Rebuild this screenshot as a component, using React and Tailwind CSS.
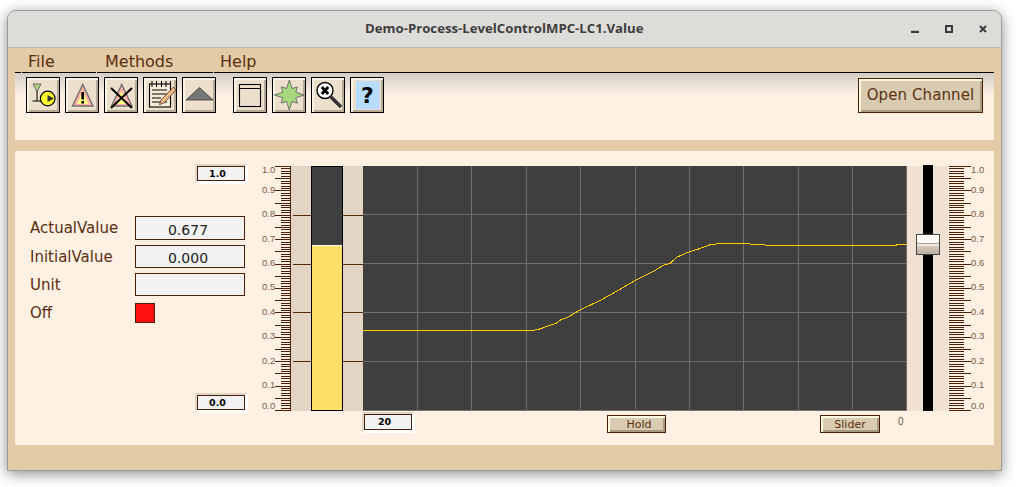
import React from "react";

const TICK = "#4a1f05";

function Scale({ side }) {
  const left = side === "left";
  const items = [];
  for (let i = 0; i <= 100; i++) {
    const y = Math.min(244, Math.round(i * 2.44));
    const long = i % 5 === 0 && i % 2 === 0 ? i % 10 === 0 || i % 5 === 0 : i % 5 === 0;
    if (left) {
      items.push(<rect key={i} x={long ? 13 : 19} y={y} width={long ? 15 : 9} height="1" fill={TICK} />);
    } else {
      items.push(<rect key={i} x="1" y={y} width={long ? 22 : 15} height="1" fill={TICK} />);
    }
  }
  const labels = ["1.0", "0.9", "0.8", "0.7", "0.6", "0.5", "0.4", "0.3", "0.2", "0.1", "0.0"];
  return (
    <svg width={left ? 29 : 37} height="245" className="shrink-0 overflow-visible">
      <g shapeRendering="crispEdges">
        {items}
        {left && <rect x="28" y="0" width="1" height="245" fill={TICK} />}
      </g>
      {labels.map((t, i) => {
        let y = i * 24.4 + 2.4;
        if (i === 0) y = 7.2;
        if (i === 10) y = 243.4;
        return (
          <text key={t} x={left ? 0 : 23} y={y} fontSize="9.5" fill="#7b5a44" fontFamily="'Liberation Sans',sans-serif">
            {t}
          </text>
        );
      })}
    </svg>
  );
}

function StripTicks({ x1 }) {
  return (
    <svg width="20" height="245" className="block">
      <g shapeRendering="crispEdges" fill="#5a2a0a">
        {[49, 98, 146, 195].map((y) => (
          <rect key={y} x={x1} y={y} width={20 - x1} height="1" />
        ))}
      </g>
    </svg>
  );
}

function Chart() {
  const pts = [
    [0, 164.5], [170, 164.5], [177, 162.9], [193.7, 156.9], [197.7, 153.9], [203.7, 151.9], [217, 143.9], [237, 134.5],
    [253.7, 125.2], [270.3, 115.5], [290.3, 105.5], [300.3, 99.2], [307, 97.5], [313.7, 91.2], [323.7, 86.8], [337, 82.5],
    [347, 78.8], [358.7, 77.2], [372, 77.2], [373.7, 77.8], [387, 77.8], [388.7, 78.8], [402, 78.8], [403, 79.5],
    [533, 79.5], [533, 78.5], [544, 78.5],
  ];
  return (
    <svg width="544" height="245" className="shrink-0 block bg-[#3f3f3f]">
      <g shapeRendering="crispEdges" fill="#707070">
        {[54, 108, 163, 217, 272, 326, 380, 435, 489].map((x) => (
          <rect key={x} x={x} y="0" width="1" height="244" />
        ))}
        {[48, 97, 146, 195].map((y) => (
          <rect key={y} x="0" y={y} width="544" height="1" />
        ))}
        <rect x="0" y="244" width="544" height="1" />
        <rect x="543" y="0" width="1" height="245" />
      </g>
      <polyline points={pts.map((p) => p.join(",")).join(" ")} fill="none" stroke="#ffcc00" strokeWidth="1" shapeRendering="crispEdges" />
    </svg>
  );
}

function Halo({ children, className = "", h = 15 }) {
  return (
    <div className={"border-t-2 border-l-2 border-r-3 border-b-3 border-t-[#e2d6c6] border-l-[#e2d6c6] border-r-white border-b-white w-[53px] " + className}>
      <div className={"border border-[#4a1f05] bg-[#f2f2f2] flex items-center justify-center text-[9.5px] font-bold text-black pr-[7px] pt-[1px] " + (h === 16 ? "h-[16px]" : "h-[15px]")}>
        {children}
      </div>
    </div>
  );
}

function Field({ label, value, rowClass, valueClass = "pt-[3px]" }) {
  return (
    <div className={"flex items-center " + rowClass}>
      <div className="w-[105px] text-[15px] text-[#5a2d0c] pt-[1px]">{label}</div>
      <div className={"w-[110px] h-full border border-[#4a1f05] bg-[#f2f2f2] text-[14px] text-[#222] flex items-center justify-center pr-[4px] " + valueClass}>
        {value}
      </div>
    </div>
  );
}

function ToolBtn({ children, className = "" }) {
  return (
    <button className={"w-[34px] h-[36px] shrink-0 border border-black bg-[#ecdfcc] shadow-[inset_2px_2px_0_#fbf4e6,inset_-2px_-2px_0_#b5aa95] " + className}>
      <svg width="32" height="34" viewBox="1 1 32 34" className="block">
        {children}
      </svg>
    </button>
  );
}

function SmallBtn({ children, className }) {
  return (
    <button className={"h-[18px] border border-[#4a1f05] bg-[#d9ccb3] shadow-[inset_2px_2px_0_#fff9e6,inset_-2px_-2px_0_#a89a82] text-[11px] text-[#5a2d0c] flex items-center justify-center shrink-0 pt-[2px] " + className}>
      {children}
    </button>
  );
}

function Warn({ inner = true }) {
  return (
    <>
      <polygon points="17.7,7.5 7.5,29 28,29" fill="#ffb0a8" stroke="#707070" strokeWidth="1.4" />
      <polygon points="17.7,14 12,27 23.5,27" fill="#ffff80" />
      {inner && (
        <>
          <rect x="16.4" y="15" width="2.6" height="7.5" fill="#000" />
          <rect x="16.4" y="24" width="2.6" height="2.6" fill="#000" />
        </>
      )}
    </>
  );
}

function starPoints() {
  const out = [];
  for (let i = 0; i < 16; i++) {
    const a = (i * Math.PI) / 8 - Math.PI / 2;
    const r = i % 4 === 0 ? 15 : i % 2 === 0 ? 11.5 : 7;
    out.push((17.3 + r * Math.cos(a)).toFixed(1) + "," + (18 + r * Math.sin(a)).toFixed(1));
  }
  return out.join(" ");
}

export default function App() {
  return (
    <div className="w-[1023px] h-[487px] overflow-hidden bg-white font-['DejaVu_Sans',sans-serif]">
      <div className="ml-[7px] mt-[10px] w-[995px] h-[461px] border border-[#9b9b9b] rounded-t-[9px] overflow-hidden shadow-[0_3px_14px_rgba(0,0,0,0.45)] bg-[#e3cba8] flex flex-col">
        <div className="h-[37px] shrink-0 border-b border-[#bdb9b2] bg-[#dedcd9] flex items-center">
          <div className="ml-[357px] font-['Open_Sans',sans-serif] font-bold text-[13.2px] text-[#3d3d3d]">
            Demo-Process-LevelControlMPC-LC1.Value
          </div>
          <div className="ml-auto mr-[14px] flex items-center gap-[26px]">
            <svg width="8" height="8"><rect x="0" y="5.8" width="8" height="2.2" fill="#3b3b3b" /></svg>
            <svg width="8" height="8"><rect x="1" y="1" width="6" height="6" fill="none" stroke="#3b3b3b" strokeWidth="2" /></svg>
            <svg width="8" height="8"><path d="M1 1 L7 7 M7 1 L1 7" stroke="#3b3b3b" strokeWidth="2" /></svg>
          </div>
        </div>

        <div className="flex-1 flex flex-col px-[7px]">
          <div className="h-[25px] shrink-0 flex gap-[1px] text-[16px] leading-[24px] text-[#5a2d0c]">
            <div className="w-[6px] border-b border-black" />
            <div className="w-[74px] border-b border-black pl-[6px] pt-[2px]">File</div>
            <div className="w-[116px] border-b border-black pl-[8px] pt-[2px]">Methods</div>
            <div className="flex-1 border-b border-black pl-[6px] pt-[2px]">Help</div>
          </div>

          <div className="h-[67px] shrink-0 flex items-start pt-[4px] pl-[11px] pr-[11px] gap-[5px] bg-linear-to-b from-[#d3cdc3] to-[#fef1e4] to-[33%]">
            <ToolBtn>
              <polygon points="7,7 15,7 11,14.5" fill="#b4d480" stroke="#666" strokeWidth="1" />
              <path d="M11 14 V24 M6.5 24 H15" stroke="#000" strokeWidth="1" fill="none" />
              <circle cx="21.7" cy="21.5" r="7.3" fill="#ffff30" stroke="#000" strokeWidth="1.2" />
              <polygon points="21.5,18 21.5,25 28,21.5" fill="#333" />
            </ToolBtn>
            <ToolBtn><Warn /></ToolBtn>
            <ToolBtn>
              <Warn inner={false} />
              <path d="M7 11 L28 31 M28 11 L7 31" stroke="#000" strokeWidth="2" fill="none" />
            </ToolBtn>
            <ToolBtn>
              <rect x="6.5" y="7" width="21" height="23" fill="#f6ead8" stroke="#000" strokeWidth="1.1" />
              <path d="M9 4 V10 M13.5 4 V10 M18.5 4 V10 M23 4 V10 M27.5 4 V10" stroke="#000" strokeWidth="1" />
              <path d="M9 13 H24 M9 17 H24 M9 21 H18 M9 25 H24" stroke="#000" strokeWidth="1" />
              <polygon points="30.5,10 33,13 21,26 16.5,27.5 18,23" fill="#f4b880" stroke="#6a5040" strokeWidth="1" />
            </ToolBtn>
            <ToolBtn>
              <polygon points="4,23 31,23 17.4,10.5" fill="#777" stroke="#111" strokeWidth="0.6" />
            </ToolBtn>
            <div className="w-[7px] shrink-0" />
            <ToolBtn>
              <rect x="6.5" y="7.5" width="21" height="22" fill="none" stroke="#000" strokeWidth="1.1" />
              <path d="M6.5 11.5 H27.5" stroke="#000" strokeWidth="1" />
            </ToolBtn>
            <ToolBtn>
              <polygon points={starPoints()} fill="#a8d880" stroke="#666" strokeWidth="0.9" />
            </ToolBtn>
            <ToolBtn>
              <path d="M20 20 L30 30" stroke="#333" strokeWidth="3.6" />
              <circle cx="14" cy="13.5" r="8" fill="#fff" stroke="#000" strokeWidth="1.4" />
              <path d="M10.8 10 L17.2 17 M17.2 10 L10.8 17" stroke="#000" strokeWidth="2.8" />
            </ToolBtn>
            <ToolBtn>
              <rect x="6" y="4" width="23.5" height="28" fill="#b8dcff" />
              <text x="17.5" y="26" textAnchor="middle" fontSize="22" fontWeight="700" fontFamily="'DejaVu Sans',sans-serif" fill="#000">?</text>
            </ToolBtn>
            <button className="ml-auto mt-[1px] w-[125px] h-[35px] shrink-0 border border-[#4a1f05] bg-[#d9cbb1] shadow-[inset_2px_2px_0_#fff9e0,inset_-2px_-2px_0_#a99a80] text-[15px] tracking-[0.1px] text-[#5a3312]">
              Open Channel
            </button>
          </div>

          <div className="h-[11px] shrink-0" />

          <div className="h-[294px] shrink-0 bg-[#fef1e4] flex">
            <div className="w-[247px] shrink-0 flex flex-col pl-[15px] pr-[14px] pt-[13px] pb-[32px]">
              <Halo className="self-end"><span>1.0</span></Halo>
              <Field label="ActualValue" value="0.677" rowClass="h-[24px] mt-[32px]" valueClass="pt-[4px]" />
              <Field label="InitialValue" value="0.000" rowClass="h-[23px] mt-[5px]" />
              <Field label="Unit" value="" rowClass="h-[23px] mt-[5px]" />
              <div className="flex items-center h-[20px] mt-[7px]">
                <div className="w-[105px] text-[15px] text-[#5a2d0c]">Off</div>
                <div className="w-[20px] h-[20px] border border-[#4a1f05] bg-[#ff1010]" />
              </div>
              <Halo className="self-end mt-auto"><span>0.0</span></Halo>
            </div>

            <div className="flex-1 flex flex-col pt-[15px]">
              <div className="h-[245px] flex shrink-0">
                <Scale side="left" />
                <div className="w-[20px] h-full bg-[#e2d5c3]"><StripTicks x1={2} /></div>
                <div className="w-[32px] h-full border border-black flex flex-col">
                  <div className="h-[78px] bg-[#3f3f3f]" />
                  <div className="h-px bg-white" />
                  <div className="flex-1 bg-[#ffe066]" />
                </div>
                <div className="w-[20px] h-full bg-[#e2d5c3]"><StripTicks x1={0} /></div>
                <Chart />
                <div className="relative w-[41px] h-full bg-[#f0e1d3] shrink-0">
                  <div className="ml-[16px] w-[10px] h-[246px] -mt-px bg-black" />
                  <div className="absolute left-[9px] top-[68px] w-[24px] h-[21px] border border-[#444] flex flex-col">
                    <div className="h-[8px] bg-[#fffdf5]" />
                    <div className="h-px bg-[#a8a098]" />
                    <div className="h-[2px] bg-[#efe9e0]" />
                    <div className="flex-1 bg-linear-to-b from-[#d4c9bb] to-[#bcb0a0]" />
                  </div>
                </div>
                <Scale side="right" />
              </div>
              <div className="flex items-start pl-[100px]">
                <Halo className="mt-px" h={16}><span>20</span></Halo>
                <SmallBtn className="ml-[192px] mt-[4px] w-[59px] pl-[5px]">Hold</SmallBtn>
                <SmallBtn className="ml-[154px] mt-[4px] w-[60px]">Slider</SmallBtn>
                <div className="ml-[18px] mt-[5px] text-[10px] leading-[12px] text-[#6a5040] font-['Liberation_Sans',sans-serif]">0</div>
              </div>
            </div>
          </div>
        </div>
      </div>
    </div>
  );
}
